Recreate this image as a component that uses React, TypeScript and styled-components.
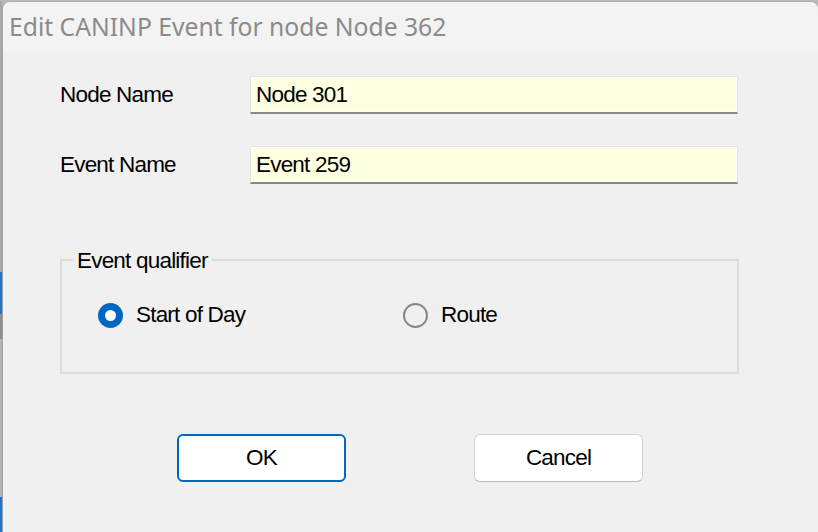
import { createGlobalStyle } from "styled-components";
import styled from "styled-components";

const GlobalStyle = createGlobalStyle`
  html, body {
    margin: 0;
    padding: 0;
    width: 818px;
    height: 532px;
    overflow: hidden;
    background-color: #b9b9b9;
  }
`;

const FONT = `"Liberation Sans", Arial, sans-serif`;

export default function App() {
  return (
    <>
      <GlobalStyle />
      <StyledScreen>
        <StyledBehindStrip />
        <StyledDialog>
          <StyledTitleBar>Edit CANINP Event for node Node 362</StyledTitleBar>
          <StyledBody>
            <StyledFieldRow>
              <StyledLabel>Node Name</StyledLabel>
              <StyledEdit value="Node 301" readOnly />
            </StyledFieldRow>
            <StyledFieldRow>
              <StyledLabel>Event Name</StyledLabel>
              <StyledEdit value="Event 259" readOnly />
            </StyledFieldRow>

            <StyledGroup>
              <StyledLegend>Event qualifier</StyledLegend>
              <StyledRadioRow>
                <StyledOption>
                  <StyledRadio $checked />
                  <StyledOptionText>Start of Day</StyledOptionText>
                </StyledOption>
                <StyledOption>
                  <StyledRadio />
                  <StyledOptionText>Route</StyledOptionText>
                </StyledOption>
              </StyledRadioRow>
            </StyledGroup>

            <StyledButtonRow>
              <StyledButton $default>OK</StyledButton>
              <StyledButton>Cancel</StyledButton>
            </StyledButtonRow>
          </StyledBody>
        </StyledDialog>
      </StyledScreen>
    </>
  );
}

const StyledScreen = styled.div`
  display: flex;
  width: 818px;
  height: 532px;
  padding-top: 1px;
  box-sizing: border-box;
`;

/* the window behind the dialog, only a sliver shows on the left */
const StyledBehindStrip = styled.div`
  width: 2px;
  flex-shrink: 0;
  background: linear-gradient(
    to bottom,
    #a8a8a8 0 271px,
    #1b74c9 271px 313px,
    #8d8d8d 313px 338px,
    #b3b3b3 338px 496px,
    #1b74c9 496px
  );
`;

const StyledDialog = styled.div`
  flex: 1;
  display: flex;
  flex-direction: column;
  background-color: #f0f0f0;
  border-left: 1px solid #a3a3a3;
  border-top: 1px solid #b0b0b0;
  border-radius: 8px 8px 0 0;
  overflow: hidden;
`;

const StyledTitleBar = styled.div`
  height: 49px;
  display: flex;
  align-items: center;
  padding-left: 6px;
  background-color: #f3f3f3;
  color: #8b8b8b;
  font-family: "Noto Sans", "Open Sans", sans-serif;
  font-size: 24.7px;
  white-space: nowrap;
`;

const StyledBody = styled.div`
  display: flex;
  flex-direction: column;
  padding: 25px 0 0 57px;
  font-family: ${FONT};
  font-size: 22.5px;
  letter-spacing: -0.8px;
  color: #000;
`;

const StyledFieldRow = styled.div`
  display: grid;
  grid-template-columns: 190px 488px;
  align-items: center;
  height: 38px;
  margin-bottom: 32px;
`;

const StyledLabel = styled.span`
  line-height: 1;
`;

const StyledEdit = styled.input`
  box-sizing: border-box;
  width: 488px;
  height: 38px;
  margin: 0;
  padding: 0 0 0 5px;
  border: 1px solid #e4e4e4;
  border-bottom: 2px solid #898989;
  box-shadow: inset 0 0 0 1px #ffffff;
  background-color: #ffffe1;
  font-family: ${FONT};
  font-size: 22.5px;
  letter-spacing: -0.8px;
  color: #000;
  outline: none;
`;

const StyledGroup = styled.fieldset`
  box-sizing: border-box;
  width: 679px;
  height: 127px;
  margin: 31px 0 0 0;
  padding: 0;
  border: 2px solid #dcdcdc;
`;

const StyledLegend = styled.legend`
  margin-left: 11px;
  padding: 2px 4px 0;
  line-height: 24px;
`;

const StyledRadioRow = styled.div`
  display: grid;
  grid-template-columns: 305px auto;
  margin-top: 30px;
  padding-left: 36px;
`;

const StyledOption = styled.div`
  display: flex;
  align-items: center;
  gap: 13px;
  height: 25px;
`;

const StyledRadio = styled.span<{ $checked?: boolean }>`
  position: relative;
  box-sizing: border-box;
  width: 25px;
  height: 25px;
  border-radius: 50%;
  flex-shrink: 0;
  background-color: ${(p) => (p.$checked ? "#0067c0" : "transparent")};
  border: ${(p) => (p.$checked ? "none" : "2px solid #878787")};

  &::after {
    content: "";
    display: ${(p) => (p.$checked ? "block" : "none")};
    position: absolute;
    top: 50%;
    left: 50%;
    width: 11px;
    height: 11px;
    margin: -5.5px 0 0 -5.5px;
    border-radius: 50%;
    background-color: #ffffff;
  }
`;

const StyledOptionText = styled.span`
  line-height: 1;
`;

const StyledButtonRow = styled.div`
  display: flex;
  gap: 128px;
  margin: 60px 0 0 117px;
`;

const StyledButton = styled.button<{ $default?: boolean }>`
  box-sizing: border-box;
  width: 169px;
  height: 48px;
  margin: 0;
  padding: 0;
  border-radius: 6px;
  background-color: #ffffff;
  border: ${(p) => (p.$default ? "2px solid #0067c0" : "1px solid #d2d2d2")};
  border-bottom-color: ${(p) => (p.$default ? "#0067c0" : "#bdbdbd")};
  font-family: ${FONT};
  font-size: 22.5px;
  letter-spacing: -0.8px;
  color: #000;
`;
